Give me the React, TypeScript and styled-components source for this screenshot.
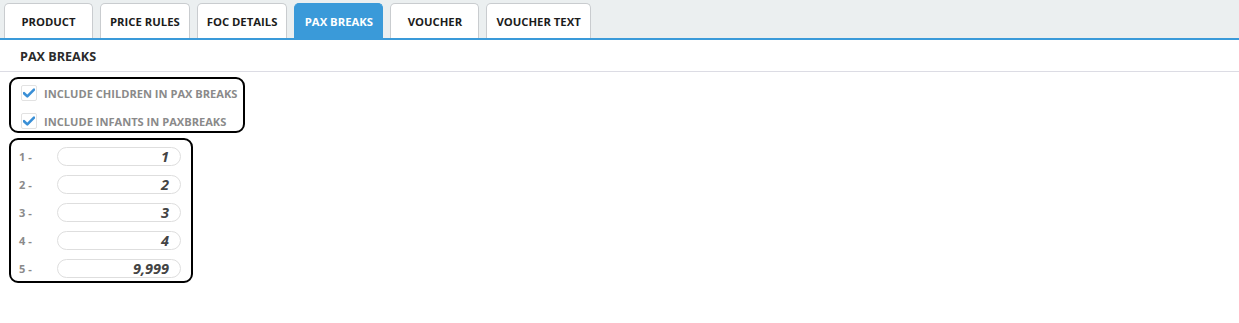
import { FC } from 'react';
import styled, { createGlobalStyle } from 'styled-components';

const GlobalStyle = createGlobalStyle`
  body {
    margin: 0;
    background: #ffffff;
    font-family: "Open Sans", "Liberation Sans", sans-serif;
  }
`;

const Page = styled.div`
  width: 1239px;
  min-height: 323px;
  background: #ffffff;
`;

const TabBar = styled.div`
  display: flex;
  align-items: flex-end;
  gap: 7px;
  height: 38px;
  padding-left: 4px;
  background: #ebeff0;
  border-bottom: 2px solid #3a9ad9;
`;

const Tab = styled.div<{ $active?: boolean }>`
  display: flex;
  align-items: center;
  justify-content: center;
  box-sizing: border-box;
  min-width: 89px;
  height: 35px;
  padding: 0 9px;
  border: 1px solid ${p => (p.$active ? '#3a9ad9' : '#c9cccf')};
  border-bottom: none;
  border-radius: 5px 5px 0 0;
  background: ${p => (p.$active ? '#3a9ad9' : '#ffffff')};
  color: ${p => (p.$active ? '#ffffff' : '#1c1c1c')};
  font-size: 11.3px;
  font-weight: 700;
  white-space: nowrap;
`;

const Heading = styled.div`
  display: flex;
  align-items: center;
  height: 30px;
  padding: 1px 20px 0;
  border-bottom: 1px solid #dcdce4;
  color: #2b2b2b;
  font-size: 12.6px;
  font-weight: 700;
`;

const Group = styled.div<{ $w: number; $h: number }>`
  box-sizing: border-box;
  width: ${p => p.$w}px;
  height: ${p => p.$h}px;
  margin: 5px 0 0 9px;
  border: 2px solid #000000;
  border-radius: 9px;
`;

const CheckList = styled.div`
  display: flex;
  flex-direction: column;
  gap: 12px;
  padding: 6px 0 0 10px;
`;

const CheckRow = styled.label`
  display: flex;
  align-items: center;
  gap: 7px;
  height: 16px;
  color: #8a8a8a;
  font-size: 11.1px;
  font-weight: 700;
`;

const Box = styled.span`
  display: flex;
  align-items: center;
  justify-content: center;
  box-sizing: border-box;
  width: 16px;
  height: 16px;
  border: 1px solid #e2e2e2;
  border-radius: 2px;
  background: #ffffff;
`;

const BreakList = styled.div`
  display: flex;
  flex-direction: column;
  gap: 9px;
  padding: 7px 0 0 8px;
`;

const BreakRow = styled.div`
  display: flex;
  align-items: center;
  height: 19px;
`;

const BreakLabel = styled.span`
  width: 38px;
  color: #8a8a8a;
  font-size: 11px;
  font-weight: 700;
`;

const BreakInput = styled.div`
  box-sizing: border-box;
  display: flex;
  align-items: center;
  justify-content: flex-end;
  width: 124px;
  height: 19px;
  padding-right: 11px;
  border: 1px solid #dedede;
  border-radius: 10px;
  color: #444444;
  font-size: 14.5px;
  font-style: italic;
  font-weight: 700;
`;

const Check: FC = () => (
  <svg width="12" height="10" viewBox="0 0 12 10">
    <path d="M1 5.2 L4.3 8.4 L11 1.6" fill="none" stroke="#3a8fd6" strokeWidth="2.6" strokeLinecap="round" strokeLinejoin="round" />
  </svg>
);

const tabs = ['PRODUCT', 'PRICE RULES', 'FOC DETAILS', 'PAX BREAKS', 'VOUCHER', 'VOUCHER TEXT'];
const options = ['INCLUDE CHILDREN IN PAX BREAKS', 'INCLUDE INFANTS IN PAXBREAKS'];
const breaks = ['1', '2', '3', '4', '9,999'];

const App: FC = () => (
  <Page>
    <GlobalStyle />
    <TabBar>
      {tabs.map(t => (
        <Tab key={t} $active={t === 'PAX BREAKS'}>{t}</Tab>
      ))}
    </TabBar>
    <Heading>PAX BREAKS</Heading>
    <Group $w={236} $h={56}>
      <CheckList>
        {options.map(o => (
          <CheckRow key={o}>
            <Box><Check /></Box>
            {o}
          </CheckRow>
        ))}
      </CheckList>
    </Group>
    <Group $w={184} $h={145}>
      <BreakList>
        {breaks.map((b, i) => (
          <BreakRow key={i}>
            <BreakLabel>{i + 1} -</BreakLabel>
            <BreakInput>{b}</BreakInput>
          </BreakRow>
        ))}
      </BreakList>
    </Group>
  </Page>
);

export default App;
